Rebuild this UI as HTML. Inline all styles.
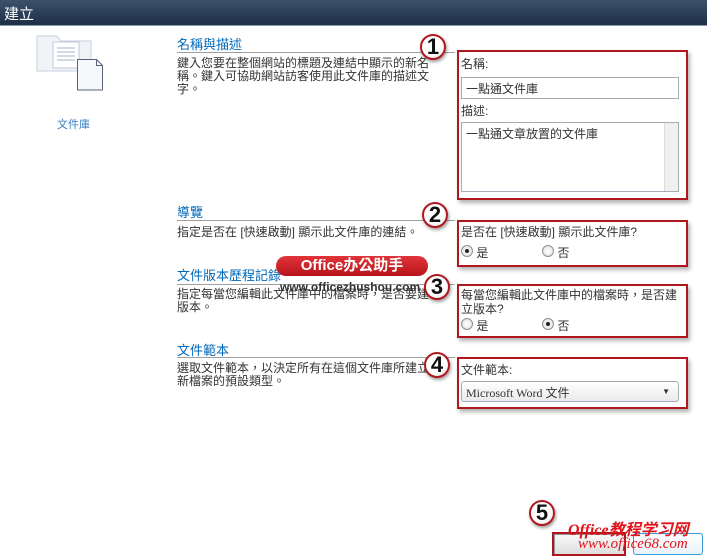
<!DOCTYPE html>
<html><head><meta charset="utf-8"><style>
*{margin:0;padding:0;box-sizing:border-box}
body{width:707px;height:554px;background:#fff;position:relative;overflow:hidden;font-family:"Liberation Sans","Noto Sans CJK TC",sans-serif;font-size:12px;color:#333}
.a{position:absolute;white-space:nowrap}
.hd{left:0;top:0;width:707px;height:26px;background:linear-gradient(#3d516b,#1d2f47);border-bottom:1px solid #8a9ab0}
.h{color:#0068b8;font-size:13px}
.ln{height:1px;background:#a0a0a0;left:177px;width:278px}
.rb{border:2px solid #b0161d;box-shadow:2px 3px 4px rgba(0,0,0,.3)}
.c{width:26px;height:26px;border-radius:50%;background:radial-gradient(circle at 40% 35%,#fff 55%,#ddd);border:2px solid #b0161d;box-shadow:1px 2px 3px rgba(0,0,0,.4);font-size:22px;color:#111;text-align:center;line-height:22px;font-weight:bold}
.in{border:1px solid #a5acb5;background:#fff;font-family:"Liberation Serif","Noto Sans CJK TC",serif}
.r{width:12px;height:12px;border-radius:50%;border:1px solid #8f8f8f;background:radial-gradient(#fff,#ddd);display:inline-block}
.r.s::after{content:"";display:block;width:4px;height:4px;border-radius:50%;background:#222;margin:3px}
</style></head><body>
<div class="a hd"></div>
<div class="a" style="left:4px;top:3px;color:#fff;font-size:15px">建立</div>
<svg class="a" style="left:36px;top:34px" width="70" height="60"><path d="M1 2h20l4 5h30v30H1z" fill="#f0f3f8" stroke="#c9d0dc"/><rect x="17" y="8" width="26" height="26" fill="#fff" stroke="#c0c8d6"/><g stroke="#a8b4c8"><path d="M21 14h18M21 18h18M21 22h18M21 26h18"/></g><path d="M41.5 25.5h19l6 6v24.5h-25z" fill="#f7f8fb" stroke="#5a6478"/><path d="M60.5 25.5v6h6" fill="none" stroke="#5a6478"/></svg>
<div class="a" style="left:57px;top:116px;color:#3a7fc1;font-size:11px">文件庫</div>

<div class="a h" style="left:177px;top:34px">名稱與描述</div><div class="a ln" style="top:52px"></div>
<div class="a" style="left:177px;top:57px;line-height:13px;white-space:normal;width:255px">鍵入您要在整個網站的標題及連結中顯示的新名稱。鍵入可協助網站訪客使用此文件庫的描述文字。</div>
<div class="a rb" style="left:457px;top:50px;width:231px;height:150px"></div>
<div class="a" style="left:461px;top:55px">名稱:</div>
<div class="a in" style="left:461px;top:77px;width:218px;height:22px;padding:2px 4px">一點通文件庫</div>
<div class="a" style="left:461px;top:102px">描述:</div>
<div class="a in" style="left:461px;top:122px;width:218px;height:70px;padding:2px 4px">一點通文章放置的文件庫<div style="position:absolute;right:0;top:0;width:14px;height:68px;background:#f0f0f0;border-left:1px solid #ddd"></div></div>
<div class="a c" style="left:420px;top:34px">1</div>

<div class="a h" style="left:177px;top:202px">導覽</div><div class="a ln" style="top:220px"></div>
<div class="a" style="left:177px;top:223px">指定是否在 [快速啟動] 顯示此文件庫的連結。</div>
<div class="a rb" style="left:457px;top:220px;width:231px;height:47px"></div>
<div class="a" style="left:461px;top:223px">是否在 [快速啟動] 顯示此文件庫?</div>
<div class="a" style="left:461px;top:244px"><span class="r s"></span> 是</div>
<div class="a" style="left:542px;top:244px"><span class="r"></span> 否</div>
<div class="a c" style="left:422px;top:202px">2</div>

<div class="a h" style="left:177px;top:265px">文件版本歷程記錄</div><div class="a ln" style="top:284px"></div>
<div class="a" style="left:177px;top:288px;line-height:13px">指定每當您編輯此文件庫中的檔案時，是否要建<br>版本。</div>
<div class="a rb" style="left:457px;top:284px;width:231px;height:54px"></div>
<div class="a" style="left:461px;top:288px;line-height:14px">每當您編輯此文件庫中的檔案時，是否建<br>立版本?</div>
<div class="a" style="left:461px;top:317px"><span class="r"></span> 是</div>
<div class="a" style="left:542px;top:317px"><span class="r s"></span> 否</div>
<div class="a" style="left:276px;top:256px;width:152px;height:20px;border-radius:10px;background:linear-gradient(#e0353a,#b8141b);color:#fff;font-weight:bold;font-size:15px;text-align:center;line-height:20px">Office办公助手</div>
<div class="a" style="left:280px;top:280px;color:#333;font-weight:bold;font-size:12px">www.officezhushou.com</div>
<div class="a c" style="left:424px;top:274px">3</div>

<div class="a h" style="left:177px;top:340px">文件範本</div><div class="a ln" style="top:357px"></div>
<div class="a" style="left:177px;top:362px;line-height:13px">選取文件範本，以決定所有在這個文件庫所建立<br>新檔案的預設類型。</div>
<div class="a rb" style="left:457px;top:357px;width:231px;height:52px"></div>
<div class="a" style="left:461px;top:361px">文件範本:</div>
<div class="a in" style="left:461px;top:381px;width:218px;height:21px;padding:2px 4px;border-radius:3px;background:linear-gradient(#fff,#eaeaea)">Microsoft Word 文件<span style="position:absolute;right:8px;top:5px;font-size:8px">▼</span></div>
<div class="a c" style="left:424px;top:352px">4</div>

<div class="a c" style="left:529px;top:500px">5</div>
<div class="a" style="left:554px;top:534px;width:72px;height:22px;background:linear-gradient(#f8f8f8,#ddd);border:1px solid #999"></div>
<div class="a rb" style="left:552px;top:532px;width:74px;height:24px;box-shadow:none"></div>
<div class="a" style="left:633px;top:533px;width:70px;height:22px;border:1px solid #3c9ad8;border-radius:3px;background:linear-gradient(#fff,#e8f2fb)"></div>
<div class="a" style="left:568px;top:516px;color:#e0151b;font-size:16px;font-style:italic;font-weight:bold;font-family:'Liberation Serif','Noto Sans CJK SC',serif">Office教程学习网</div>
<div class="a" style="left:578px;top:536px;color:#e0151b;font-size:15px;font-style:italic;font-family:'Liberation Serif',serif">www.office68.com</div>
</body></html>
